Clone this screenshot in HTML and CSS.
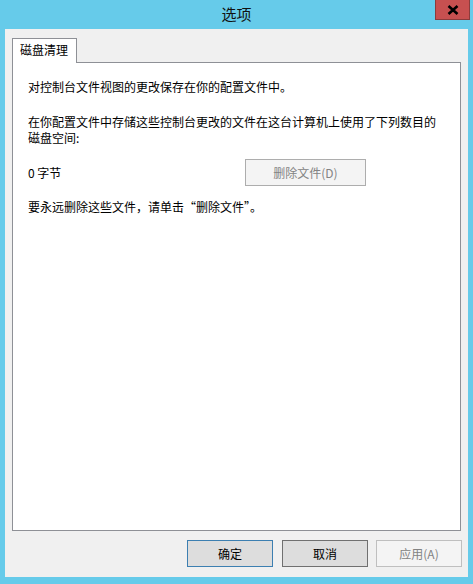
FILE: index.html
```html
<!DOCTYPE html>
<html lang="zh-CN">
<head>
<meta charset="utf-8">
<title>选项</title>
<link rel="stylesheet" href="styles.css">
</head>
<body>
<div class="window">
  <div class="titlebar">
    <div class="title">选项</div>
    <div class="close">
      <svg width="12" height="10" viewBox="0 0 12 10"><path d="M1.5 1 L10.5 9 M10.5 1 L1.5 9" stroke="#000" stroke-width="2.6" fill="none"/></svg>
    </div>
  </div>
  <div class="client">
    <div class="tabs">
      <div class="tab">磁盘清理</div>
    </div>
    <div class="panel">
      <p class="line first">对控制台文件视图的更改保存在你的配置文件中。</p>
      <p class="line para">在你配置文件中存储这些控制台更改的文件在这台计算机上使用了下列数目的<br>磁盘空间:</p>
      <div class="row">
        <span class="size">0 字节</span>
        <button class="btn disabled del">删除文件(D)</button>
      </div>
      <p class="line">要永远删除这些文件，请单击“删除文件”。</p>
    </div>
    <div class="actions">
      <button class="btn default">确定</button>
      <button class="btn normal">取消</button>
      <button class="btn disabled">应用(A)</button>
    </div>
  </div>
</div>
</body>
</html>
```
FILE: styles.css
```css
html, body {
  margin: 0;
  padding: 0;
  width: 473px;
  height: 584px;
  overflow: hidden;
}
body {
  font-family: "Noto Sans CJK SC", "Microsoft YaHei", sans-serif;
  font-size: 12px;
  color: #000;
}
.window {
  width: 473px;
  height: 584px;
  background: #66cbea;
  display: flex;
  flex-direction: column;
  box-sizing: border-box;
  padding: 0 5px 7px 5px;
}
.titlebar {
  height: 29px;
  display: flex;
  align-items: center;
  justify-content: center;
  position: relative;
  flex: none;
}
.title {
  font-size: 15px;
  line-height: 20px;
  margin-top: -2px;
  color: #111;
}
.close {
  position: absolute;
  top: 0;
  right: -2px;
  width: 35px;
  height: 20px;
  box-sizing: border-box;
  background: #c75050;
  border: 1px solid #8b3c3c;
  border-top: none;
  display: flex;
  align-items: center;
  justify-content: center;
}
.client {
  flex: 1;
  background: #f0f0f0;
  display: flex;
  flex-direction: column;
  padding: 9px 7px 10px 7px;
  min-height: 0;
}
.tabs {
  display: flex;
  flex: none;
}
.tab {
  position: relative;
  z-index: 1;
  width: 65px;
  height: 25px;
  box-sizing: border-box;
  margin-bottom: -1px;
  background: #fff;
  border: 1px solid #8e9096;
  border-bottom: none;
  padding-left: 7px;
  line-height: 22px;
  font-size: 12px;
}
.panel {
  flex: 1;
  background: #fff;
  border: 1px solid #8e9096;
  padding: 16px 0 0 15px;
}
.line {
  margin: 0;
  line-height: 16px;
}
.para {
  margin-top: 19px;
}
.row {
  display: flex;
  align-items: center;
  margin-top: 13px;
  height: 27px;
}
.size {
  width: 217px;
  line-height: 16px;
}
.row + .line {
  margin-top: 13px;
}
.btn {
  font-family: "Noto Sans CJK SC", "Microsoft YaHei", sans-serif;
  font-size: 12px;
  height: 27px;
  width: 86px;
  box-sizing: border-box;
  padding: 0;
  margin: 0;
  line-height: 16px;
}
.del {
  width: 121px;
}
.disabled {
  background: #f4f4f4;
  border: 1px solid #adadad;
  color: #838383;
}
.default {
  background: #dddddd;
  border: 1px solid #3c7fb1;
  color: #000;
}
.normal {
  background: #dddddd;
  border: 1px solid #707070;
  color: #000;
}
.actions {
  flex: none;
  display: flex;
  justify-content: flex-end;
  margin-top: 9px;
  margin-right: -1px;
  gap: 9px;
}
.actions .btn.disabled {
  margin-left: -1px;
  border-color: #bfbfbf;
}
```
